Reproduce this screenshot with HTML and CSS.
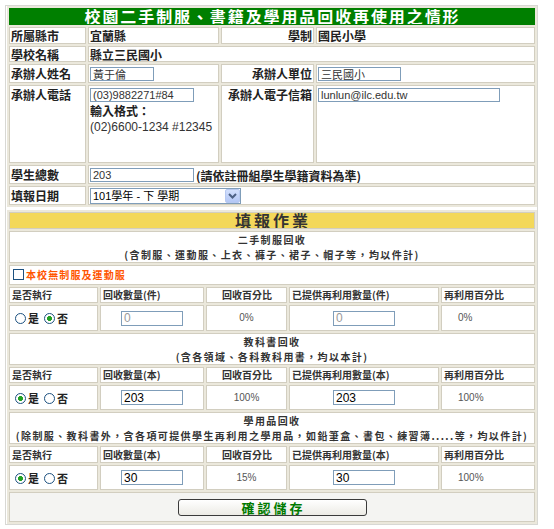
FILE: index.html
```html
<!DOCTYPE html>
<html lang="zh-Hant">
<head>
<meta charset="utf-8">
<title>校園二手制服、書籍及學用品回收再使用之情形</title>
<link rel="stylesheet" href="styles.css">
</head>
<body>
<div class="frame">
  <table class="info">
    <colgroup><col class="i1"><col class="i2"><col class="i3"><col class="i4"></colgroup>
    <tr class="h17"><td colspan="4" class="title">校園二手制服、書籍及學用品回收再使用之情形</td></tr>
    <tr class="h17"><td>所屬縣市</td><td>宜蘭縣</td><td class="rt">學制</td><td>國民小學</td></tr>
    <tr class="h16"><td>學校名稱</td><td colspan="3">縣立三民國小</td></tr>
    <tr class="h19"><td>承辦人姓名</td><td><input class="tx w64" value="黃于倫"></td><td class="rt">承辦人單位</td><td><input class="tx w83" value="三民國小"></td></tr>
    <tr class="h78 top">
      <td class="lbl">承辦人電話</td>
      <td class="phone"><input class="tx w104" value="(03)9882271#84"><div>輸入格式：</div><div class="fmt">(02)6600-1234 #12345</div></td>
      <td class="rt lbl">承辦人電子信箱</td>
      <td class="phone"><input class="tx w182" value="lunlun@ilc.edu.tw"></td>
    </tr>
    <tr class="h19"><td>學生總數</td><td colspan="3"><input class="tx w104" value="203"><span class="note">(請依註冊組學生學籍資料為準)</span></td></tr>
    <tr class="h19"><td>填報日期</td><td colspan="3">
      <span class="sel"><select><option>101學年 - 下 學期</option><option>101學年 - 上 學期</option></select><span class="arrow"><svg width="9" height="6" viewBox="0 0 9 6"><polyline points="1,1 4.5,4.5 8,1" fill="none" stroke="#4d6185" stroke-width="2"/></svg></span></span>
    </td></tr>
  </table>

  <table class="work">
    <colgroup><col class="w1"><col class="w2"><col class="w3"><col class="w4"><col class="w5"></colgroup>
    <tr class="h17"><td colspan="5" class="band">填報作業</td></tr>

    <tr class="h32"><td colspan="5" class="sect"><div>二手制服回收</div><div>(含制服、運動服、上衣、褲子、裙子、帽子等，均以件計)</div></td></tr>
    <tr class="h20"><td colspan="5" class="none"><label><input type="checkbox" class="cb">本校無制服及運動服</label></td></tr>
    <tr class="h16 hd"><td>是否執行</td><td>回收數量(件)</td><td class="c">回收百分比</td><td>已提供再利用數量(件)</td><td>再利用百分比</td></tr>
    <tr class="h26 dt">
      <td class="yn"><label><input type="radio" name="u">是</label><label><input type="radio" name="u" checked>否</label></td>
      <td class="c"><input class="num" value="0" disabled></td>
      <td class="c pct">0%</td>
      <td class="c"><input class="num" value="0" disabled></td>
      <td class="pct p2">0%</td>
    </tr>

    <tr class="h32"><td colspan="5" class="sect"><div>教科書回收</div><div>(含各領域、各科教科用書，均以本計)</div></td></tr>
    <tr class="h16 hd"><td>是否執行</td><td>回收數量(本)</td><td class="c">回收百分比</td><td>已提供再利用數量(本)</td><td>再利用百分比</td></tr>
    <tr class="h25 dt">
      <td class="yn"><label><input type="radio" name="b" checked>是</label><label><input type="radio" name="b">否</label></td>
      <td class="c"><input class="num" value="203"></td>
      <td class="c pct">100%</td>
      <td class="c"><input class="num" value="203"></td>
      <td class="pct p2">100%</td>
    </tr>

    <tr class="h32"><td colspan="5" class="sect"><div>學用品回收</div><div>(除制服、教科書外，含各項可提供學生再利用之學用品，如鉛筆盒、書包、練習簿.....等，均以件計)</div></td></tr>
    <tr class="h17 hd"><td>是否執行</td><td>回收數量(本)</td><td class="c">回收百分比</td><td>已提供再利用數量(本)</td><td>再利用百分比</td></tr>
    <tr class="h25 dt">
      <td class="yn"><label><input type="radio" name="s" checked>是</label><label><input type="radio" name="s">否</label></td>
      <td class="c"><input class="num" value="30"></td>
      <td class="c pct">15%</td>
      <td class="c"><input class="num" value="30"></td>
      <td class="pct p2">100%</td>
    </tr>

    <tr class="h30"><td colspan="5" class="btnrow"><button class="save">確認儲存</button></td></tr>
  </table>
</div>
</body>
</html>
```

FILE: styles.css
```css
* { box-sizing: border-box; }

body {
  margin: 0;
  background: #fff;
  font-family: "Noto Sans CJK TC", "Liberation Sans", sans-serif;
  color: #222;
}

.frame {
  margin: 5px 0 0 5px;
  width: 533px;
  border: 1px solid #d8d8d4;
  padding: 0 0 0 1px;
}

table {
  border-collapse: separate;
  border-spacing: 2px;
  background: #ebe8dc;
  table-layout: fixed;
  width: 530px;
}

td {
  background: #fff;
  border: 1px solid #d2cec0;
  padding: 0 1px;
  font-size: 12px;
  font-weight: bold;
  line-height: 13px;
  white-space: nowrap;
  vertical-align: middle;
  overflow: hidden;
}

/* column widths (content of cells, spacing excluded) */
.i1 { width: 77px; }
.i2 { width: 131px; }
.i3 { width: 93px; }
.i4 { width: 219px; }

.w1 { width: 89px; }
.w2 { width: 104px; }
.w3 { width: 81px; }
.w4 { width: 150px; }
.w5 { width: 94px; }

/* row heights */
.h16 td { height: 16px; }
.h17 td { height: 17px; }
.h19 td { height: 19px; }
.h20 td { height: 20px; }
.h25 td { height: 25px; }
.h26 td { height: 26px; }
.h30 td { height: 30px; }
.h32 td { height: 32px; }
.h78 td { height: 78px; }

.top td { vertical-align: top; }

.title {
  background: #007f00;
  border-color: #007f00;
  color: #fff;
  text-align: center;
  font-size: 16px;
  line-height: 15px;
  letter-spacing: 1.9px;
  padding-left: 2px;
}

.rt { text-align: right; }

.lbl { padding-top: 2px; }

.phone { padding-top: 1px; line-height: 16px; }

.fmt {
  font-family: "Liberation Sans", sans-serif;
  font-weight: normal;
  font-size: 12px;
  color: #333;
}

.tx {
  height: 14px;
  border: 1px solid #7f9db9;
  padding: 0 2px;
  font-family: "Liberation Sans", "Noto Sans CJK TC", sans-serif;
  font-size: 11px;
  line-height: 12px;
  color: #333;
  background: #fff;
  vertical-align: middle;
  margin: 0;
  outline: none;
}
.w64 { width: 64px; }
.w83 { width: 83px; }
.w104 { width: 104px; }
.w182 { width: 182px; }

.phone .tx { vertical-align: top; margin-top: 1px; }

.note { margin-left: 2px; vertical-align: middle; }

.sel {
  display: inline-flex;
  align-items: center;
  width: 151px;
  height: 16px;
  border: 1px solid #7f9db9;
  background: #fff;
  vertical-align: middle;
}
.sel select {
  appearance: none;
  -webkit-appearance: none;
  border: 0;
  outline: none;
  flex: 1;
  min-width: 0;
  height: 14px;
  padding: 0 2px;
  background: #fff;
  font-family: "Liberation Sans", "Noto Sans CJK TC", sans-serif;
  font-size: 11px;
  line-height: 12px;
  color: #000;
}
.arrow {
  display: flex;
  align-items: center;
  justify-content: center;
  width: 15px;
  height: 14px;
  background: linear-gradient(#d3e0fd, #b3c7f5);
  border: 1px solid #b7c9f1;
  border-radius: 2px;
}

/* work table */
.work { margin-top: 3px; }

.band {
  background: #f3d85a;
  text-align: center;
  font-size: 16px;
  line-height: 15px;
  letter-spacing: 3px;
  color: #333;
  padding-left: 3px;
}

.sect {
  text-align: center;
  font-size: 10px;
  line-height: 15px;
  letter-spacing: 1.4px;
  color: #333;
}
.sect div { height: 15px; line-height: 15px; }

.none {
  font-size: 10px;
  line-height: 12px;
  letter-spacing: 1.1px;
  color: #ff5500;
  padding-left: 3px;
}

.cb {
  appearance: none;
  -webkit-appearance: none;
  width: 11px;
  height: 11px;
  border: 1px solid #1c5180;
  background: #fff;
  margin: 0 2px 0 0;
  vertical-align: -1px;
}

.hd td {
  font-size: 10px;
  line-height: 12px;
  padding-left: 2px;
  color: #333;
}

.dt td { line-height: 12px; }

.c { text-align: center; }

.yn {
  padding-left: 5px;
  font-size: 11px;
}
.yn label { margin-right: 5px; }

input[type="radio"] {
  appearance: none;
  -webkit-appearance: none;
  width: 11px;
  height: 11px;
  border: 1px solid #1c5180;
  border-radius: 50%;
  background: #fff;
  margin: 0 2px 0 0;
  vertical-align: -1px;
}
input[type="radio"]:checked {
  background: radial-gradient(circle, #21a121 0 2.2px, #fff 2.8px);
}

.num {
  width: 62px;
  height: 15px;
  border: 1px solid #7f9db9;
  padding: 0 2px;
  margin: 0;
  font-family: "Liberation Sans", sans-serif;
  font-size: 12px;
  line-height: 13px;
  color: #000;
  background: #fff;
  outline: none;
  vertical-align: middle;
}
.num:disabled { color: #9a9a9a; background: #fff; }

.pct {
  font-family: "Liberation Sans", sans-serif;
  font-weight: normal;
  font-size: 10px;
  color: #555;
}
.p2 { padding-left: 16px; }

.btnrow {
  background: #f4f4f2;
  text-align: center;
  line-height: 12px;
}

.save {
  width: 189px;
  height: 17px;
  padding: 0 0 0 3px;
  border: 1px solid #3a3a3a;
  border-radius: 3px;
  background: linear-gradient(#ffffff, #ecebe5);
  font-family: "Noto Sans CJK TC", sans-serif;
  font-size: 13px;
  font-weight: bold;
  line-height: 15px;
  letter-spacing: 3px;
  color: #007a00;
  vertical-align: middle;
}
```
